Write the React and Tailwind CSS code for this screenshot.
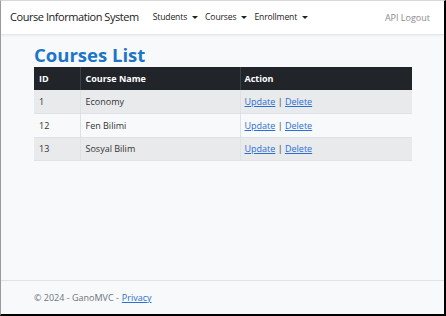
import React from 'react';

const courses = [
    { id: 1, name: 'Economy' },
    { id: 12, name: 'Fen Bilimi' },
    { id: 13, name: 'Sosyal Bilim' },
];

const Caret = () => <span className="inline-block ml-[5px] align-middle border-x-[3px] border-x-transparent border-t-[3.5px] border-t-[#222]" />;

const App = () => {
    return (
        <div className="relative h-[316px] w-[446px] overflow-hidden bg-[#f8f9fa] font-['Open_Sans','Noto_Sans',sans-serif] text-[#212529] border-l border-l-[#9a9a9a] border-r-2 border-r-black border-b-2 border-b-black border-t border-t-[#d9d9d9] flex flex-col">
            {/* navbar */}
            <nav className="h-[34px] bg-white border-b border-[#e3e6ea] shadow-[0_1px_3px_rgba(0,0,0,0.05)] flex items-center pl-[9px] pr-[14px] shrink-0">
                <span className="text-[11px] text-[#222] tracking-[-0.45px] mr-[14px]">Course Information System</span>
                <div className="flex items-center gap-[7px] text-[8.6px] text-[#222] tracking-[-0.15px]">
                    <span>Students<Caret /></span>
                    <span>Courses<Caret /></span>
                    <span>Enrollment<Caret /></span>
                </div>
                <span className="ml-auto text-[9px] text-[#8a8a8a]">API Logout</span>
            </nav>

            <main className="flex-1 px-[33px] pt-[9px]">
                <h1 className="text-[18.5px] font-bold text-[#1b75c9] leading-[22px] mb-[1px]">Courses List</h1>
                <table className="w-[378px] text-[9px] border-collapse">
                    <thead>
                        <tr className="bg-[#212529] text-white h-[23px]">
                            <th className="w-[46px] text-left font-bold pl-[5px]">ID</th>
                            <th className="w-[160px] text-left font-bold pl-[5px] border-l border-[#3a3f44]">Course Name</th>
                            <th className="text-left font-bold pl-[4px] border-l border-[#3a3f44]">Action</th>
                        </tr>
                    </thead>
                    <tbody>
                        {courses.map((c, i) => (
                            <tr key={c.id} className={`h-[23.5px] border-b border-[#dee2e6] ${i % 2 === 0 ? 'bg-[#e9eaeb]' : 'bg-[#f8f9fa]'}`}>
                                <td className="pl-[5px] text-[#333]">{c.id}</td>
                                <td className="pl-[5px] text-[#333] border-l border-[#dee2e6]">{c.name}</td>
                                <td className="pl-[4px] border-l border-[#dee2e6]">
                                    <a className="text-[#2a6fd6] underline">Update</a>
                                    <span className="text-[#333]"> | </span>
                                    <a className="text-[#2a6fd6] underline">Delete</a>
                                </td>
                            </tr>
                        ))}
                    </tbody>
                </table>
            </main>

            <footer className="h-[34px] border-t border-[#dee2e6] flex items-center pl-[33px] text-[9px] text-[#6c757d] shrink-0">
                © 2024 - GanoMVC - <a className="ml-[3px] text-[#2a6fd6] underline">Privacy</a>
            </footer>
        </div>
    );
};

export default App;
